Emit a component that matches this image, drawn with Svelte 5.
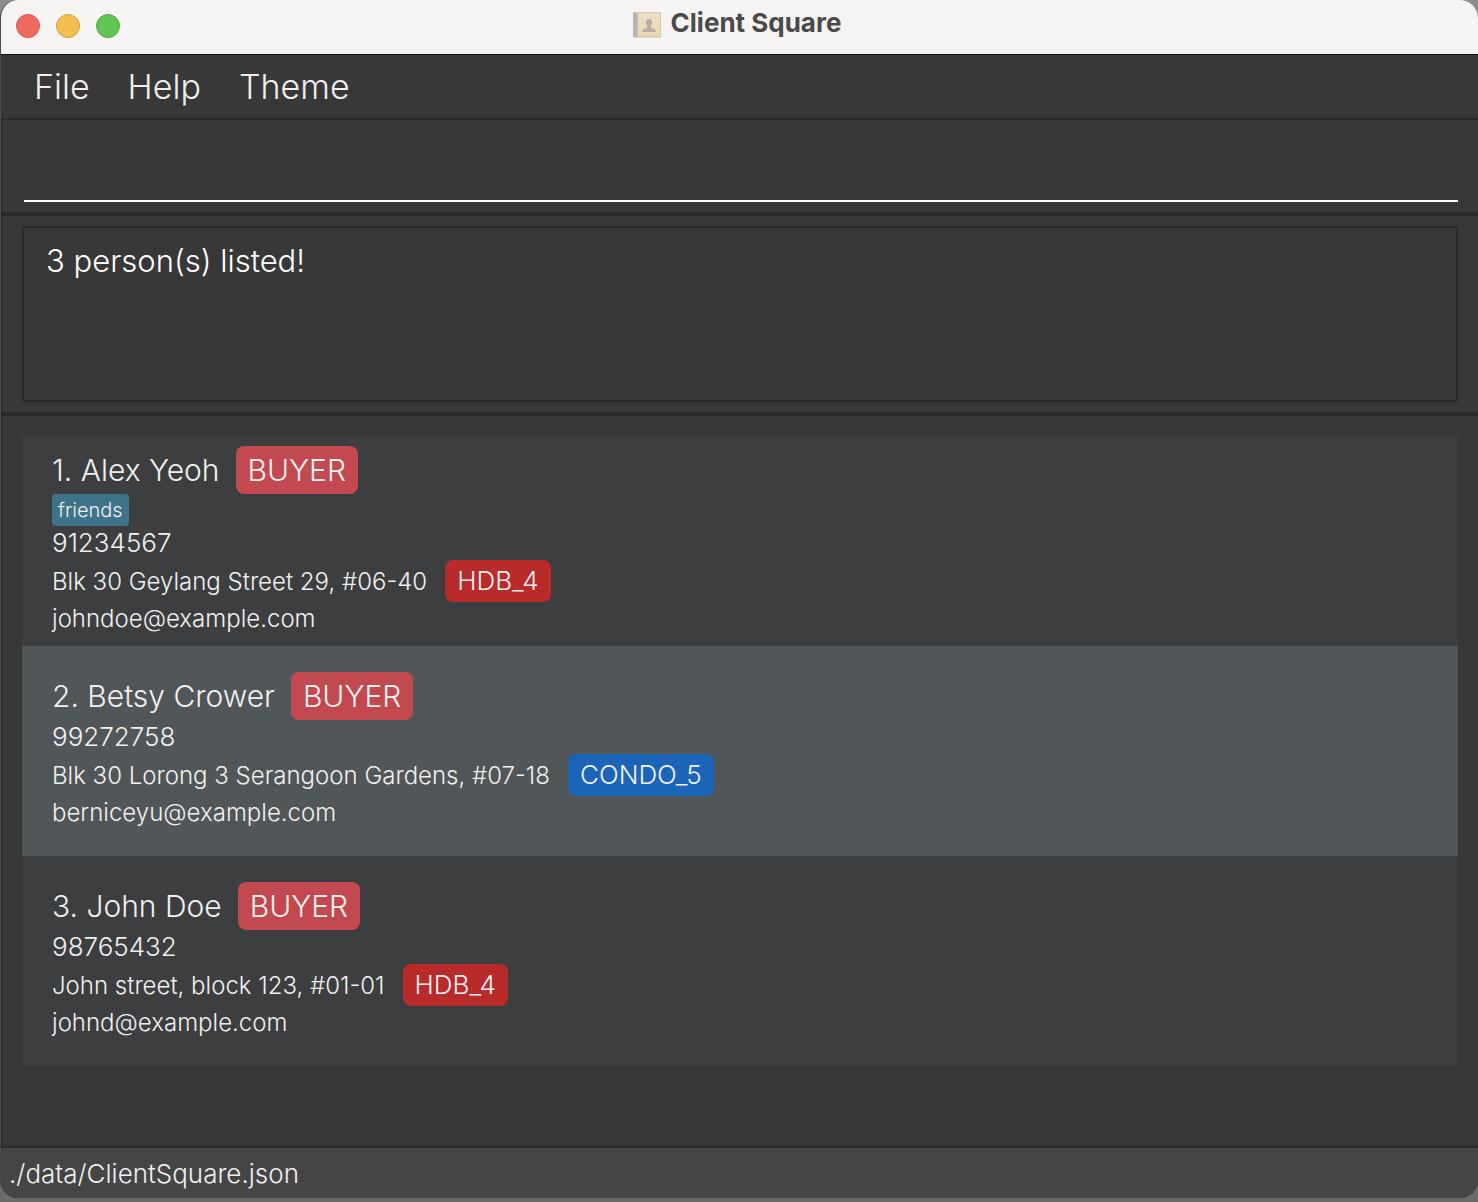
<script>
  let command = $state('');
  const result = '3 person(s) listed!';
  const menus = ['File', 'Help', 'Theme'];
  const people = [
    { name: 'Alex Yeoh', role: 'BUYER', tags: ['friends'], phone: '91234567', address: 'Blk 30 Geylang Street 29, #06-40', home: 'HDB_4', kind: 'hdb', email: 'johndoe@example.com' },
    { name: 'Betsy Crower', role: 'BUYER', tags: [], phone: '99272758', address: 'Blk 30 Lorong 3 Serangoon Gardens, #07-18', home: 'CONDO_5', kind: 'condo', email: 'berniceyu@example.com' },
    { name: 'John Doe', role: 'BUYER', tags: [], phone: '98765432', address: 'John street, block 123, #01-01', home: 'HDB_4', kind: 'hdb', email: 'johnd@example.com' }
  ];
</script>

<div class="window">
  <header class="titlebar">
    <div class="lights">
      <button class="light close" aria-label="Close"></button>
      <button class="light minimise" aria-label="Minimise"></button>
      <button class="light zoom" aria-label="Zoom"></button>
    </div>
    <div class="title">
      <svg width="28" height="28" viewBox="0 0 28 28" aria-hidden="true">
        <defs>
          <linearGradient id="cover" x1="0" y1="0" x2="0" y2="1">
            <stop offset="0" stop-color="#eee0c6" />
            <stop offset="1" stop-color="#ead8ae" />
          </linearGradient>
        </defs>
        <rect x="0" y="25" width="28" height="2" rx="1" fill="#dedad3" />
        <rect x="0" y="1" width="28" height="25" rx="1" fill="url(#cover)" />
        <path d="M1 1h4v25H1a1 1 0 0 1-1-1V2a1 1 0 0 1 1-1z" fill="#bbb3ae" />
        <path d="M5 1v25" stroke="#d9d0c4" />
        <path d="M0 1.5h28" stroke="#d3cabb" />
        <path d="M27.5 2v23M5 25.5h22" stroke="#d8c9a8" />
        <path d="M16 8c-2 0-3 1.400-3 3.300 0 1.700.6 2.900 1.400 3.700v1.500c-.5 1-5.400 1-5.400 4.500h14c0-3.500-4.900-3.500-5.400-4.500V15c.8-.8 1.400-2 1.400-3.700C19 9.400 18 8 16 8z" fill="#b5ada5" />
      </svg>
      <h1>Client Square</h1>
    </div>
  </header>

  <nav class="menubar" aria-label="Main menu">
    {#each menus as menu}
      <button>{menu}</button>
    {/each}
  </nav>

  <div class="command">
    <input type="text" aria-label="Command" bind:value={command} />
  </div>

  <div class="result">
    <textarea readonly aria-label="Result" value={result}></textarea>
  </div>

  <main>
    <ol>
      {#each people as person, i}
        <li>
          <div class="name"><span>{i + 1}. {person.name}</span><span class="badge role">{person.role}</span></div>
          {#if person.tags.length}
            <div class="tags">
              {#each person.tags as tag}<span class="tag">{tag}</span>{/each}
            </div>
          {/if}
          <div class="line phone">{person.phone}</div>
          <div class="address"><span>{person.address}</span><span class="badge {person.kind}">{person.home}</span></div>
          <div class="line">{person.email}</div>
        </li>
      {/each}
    </ol>
  </main>

  <footer>./data/ClientSquare.json</footer>
</div>

<style>
  :global(body) {
    margin: 0;
    background: linear-gradient(#8c8c8c 0 50%, #6a6a6a 50%);
  }
  .window, .window * { box-sizing: border-box; }
  .window {
    display: flex;
    flex-direction: column;
    min-height: calc(100vh - 4px);
    margin-bottom: 4px;
    border-left: 1px solid #4a4a4a;
    border-radius: 18px;
    overflow: hidden;
    background: #383838;
    color: #f0f0f0;
    font-family: Inter, "Liberation Sans", sans-serif;
    font-weight: 300;
  }
  button, input, textarea {
    font: inherit;
    color: inherit;
    background: none;
    border: 0;
    padding: 0;
    margin: 0;
  }
  .titlebar {
    display: grid;
    grid-template-columns: 1fr auto 1fr;
    align-items: center;
    height: 55px;
    padding-bottom: 2px;
    margin-left: -1px;
    background: #f5f4f2;
    border-bottom: 1px solid #101010;
  }
  .lights { display: flex; gap: 16px; padding-left: 16px; }
  .light { width: 24px; height: 24px; border-radius: 50%; border: 1px solid; }
  .close { background: #ed6a5e; border-color: #d5574c; }
  .minimise { background: #f5bf4f; border-color: #d8a13d; }
  .zoom { background: #61c554; border-color: #50a845; }
  .title { display: flex; align-items: center; gap: 10px; padding: 0 4px 7px 0; }
  .title svg { display: block; margin-top: 4px; }
  h1 { margin: 0; font-size: 26px; line-height: 30px; font-weight: 700; color: #4b4a49; }
  .menubar {
    display: flex;
    gap: 38px;
    padding: 0 33px;
    height: 65px;
    align-items: center;
    font-size: 34px;
    border-bottom: 2px solid #2b2b2b;
  }
  .command {
    padding: 20px 20px 10px 22px;
    border-left: 1px solid #2b2b2b;
    border-bottom: 4px solid #2b2b2b;
  }
  .command input {
    display: block;
    width: 100%;
    height: 62px;
    font-size: 31px;
    color: #fff;
    border-bottom: 2px solid #fff;
    outline: 0;
  }
  .result {
    padding: 10px 20px;
    border-left: 1px solid #2b2b2b;
    border-bottom: 4px solid #2b2b2b;
  }
  textarea {
    display: block;
    width: 100%;
    height: 176px;
    padding: 12px 22px;
    border: 2px solid #2b2b2b;
    resize: none;
    font-size: 31px;
    line-height: 42px;
    color: #fff;
    outline: 0;
  }
  main { flex: 1; padding: 20px; border-left: 1px solid #2b2b2b; }
  ol { list-style: none; margin: 0; padding: 0; }
  li {
    display: flex;
    flex-direction: column;
    justify-content: center;
    min-height: 210px;
    padding: 10px 30px;
    background: #3c3e3f;
    font-size: 24px;
  }
  li:nth-child(even) { background: #515658; }
  .name, .address { display: flex; align-items: center; gap: 18px; }
  .name { height: 48px; font-size: 30px; gap: 16px; }
  .address { height: 42px; }
  .line { line-height: 34px; }
  .phone { font-size: 26px; }
  .badge { padding: 0 12px; border-radius: 8px; font-size: 26px; line-height: 42px; }
  .role { background: #c1494f; font-size: 30px; line-height: 48px; }
  .hdb { background: #b92b2b; }
  .condo { background: #1c64b7; }
  .tags { display: flex; gap: 6px; height: 32px; }
  .tag { padding: 0 6px; border-radius: 4px; background: #3e7489; font-size: 20px; line-height: 32px; }
  footer {
    padding: 5px 8px 4px;
    border-top: 2px solid #2b2b2b;
    background: #454545;
    font-size: 26px;
    line-height: 41px;
  }
</style>
